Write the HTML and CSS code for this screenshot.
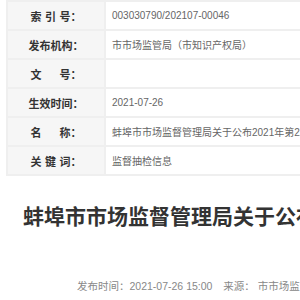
FILE: index.html
```html
<!DOCTYPE html>
<html>
<head>
    <title>蚌埠市市场监督管理局</title>
    <meta charset="utf-8">
    <link rel="stylesheet" href="styles.css">
</head>
<body>
    <div class="page">
        <table class="info-table">
            <tr>
                <th><span class="spread">索引号</span>：</th>
                <td>003030790/202107-00046</td>
            </tr>
            <tr>
                <th>发布机构：</th>
                <td>市市场监管局（市知识产权局）</td>
            </tr>
            <tr>
                <th><span class="spread">文号</span>：</th>
                <td></td>
            </tr>
            <tr>
                <th>生效时间：</th>
                <td>2021-07-26</td>
            </tr>
            <tr>
                <th><span class="spread">名称</span>：</th>
                <td>蚌埠市市场监督管理局关于公布2021年第22期食品安全监督抽检信息的通告</td>
            </tr>
            <tr>
                <th><span class="spread">关键词</span>：</th>
                <td>监督抽检信息</td>
            </tr>
        </table>

        <h1 class="title">蚌埠市市场监督管理局关于公布2021年第22期食品安全监督抽检信息的通告</h1>

        <div class="meta">
            <span>发布时间：2021-07-26 15:00</span>
            <span class="source">来源： 市市场监管局</span>
        </div>
    </div>
</body>
</html>
```

FILE: styles.css
```css
html, body {
    margin: 0;
    padding: 0;
    overflow: hidden;
}
body {
    font-family: "Liberation Sans", "Noto Sans CJK SC", sans-serif;
    background: #fff;
}
.page {
    width: 900px;
    padding-left: 6px;
}
.info-table {
    width: 800px;
    border-collapse: collapse;
}
.info-table th,
.info-table td {
    border: 2px solid #efefef;
    height: 27px;
    padding: 0;
    white-space: nowrap;
}
.info-table th {
    width: 96px;
    background: #f6f6f6;
    color: #333;
    font-size: 11px;
    font-weight: bold;
    text-align: center;
}
.info-table td {
    color: #666;
    font-size: 10px;
    padding-left: 6px;
    text-align: left;
}
.spread {
    display: inline-block;
    width: 40px;
    text-align: justify;
    text-align-last: justify;
}
.title {
    margin: 24px 0 0 17px;
    font-family: "Noto Sans CJK SC", sans-serif;
    font-size: 21px;
    line-height: 30px;
    font-weight: bold;
    color: #333;
    white-space: nowrap;
}
.meta {
    margin: 46px 0 0 71px;
    font-size: 10.5px;
    line-height: 20px;
    color: #888;
    white-space: nowrap;
}
.meta .source {
    margin-left: 8px;
}
```
